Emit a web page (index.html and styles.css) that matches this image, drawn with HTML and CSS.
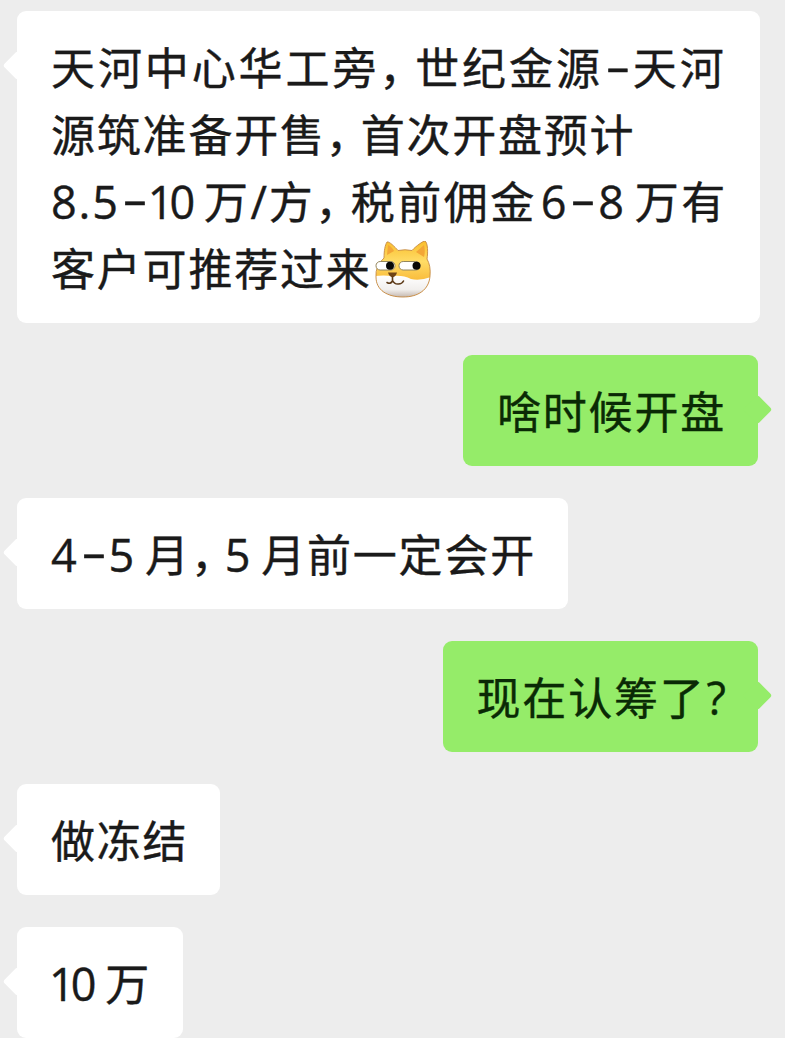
FILE: index.html
```
<!DOCTYPE html>
<html lang="zh-CN">
<head>
  <meta charset="UTF-8" />
  <meta name="viewport" content="width=device-width, initial-scale=1.0" />
  <title>聊天记录</title>
  <link rel="stylesheet" href="styles.css">
</head>
<body>
  <div class="chat">
    <div class="bubble left long">
      <div class="line wide">天河中心华工旁<span class="comma">，</span>世纪金源<span class="dash">-</span>天河</div>
      <div class="line">源筑准备开售<span class="comma">，</span>首次开盘预计</div>
      <div class="line mid"><span class="num first ten">8.5<span class="dash">-</span><span class="one">1</span>0</span>万<span class="num slash">/</span>方<span class="comma">，</span>税前佣金<span class="num">6<span class="dash">-</span>8</span>万有</div>
      <div class="line">客户可推荐过来<svg class="doge" viewBox="0 0 56 58">
        <defs>
          <linearGradient id="fur" x1="0" y1="0" x2="0" y2="1">
            <stop offset="0" stop-color="#f9bd2b" />
            <stop offset="0.35" stop-color="#ffdc66" />
            <stop offset="0.8" stop-color="#f7b02c" />
          </linearGradient>
          <linearGradient id="chin" x1="0" y1="0" x2="0" y2="1">
            <stop offset="0" stop-color="#ffffff" />
            <stop offset="0.6" stop-color="#f1efed" />
            <stop offset="1" stop-color="#b9aaa0" />
          </linearGradient>
          <clipPath id="head">
            <path d="M12 1 C14 0 20 6 23 9.500 Q30 8 37 9.500 C41 5 48 0 50 0 C53 2 53 12 52 18 Q56 25 55 35 C54 49 43 56 28 56 C12 56 1 49 1 36 Q0 25 9 17 C9 10 10 4 12 1Z" />
          </clipPath>
        </defs>
        <g clip-path="url(#head)">
          <rect width="56" height="58" fill="url(#fur)" />
          <path d="M13 4 C16 5 18 8 19 10 L12 14Z M49 4 C50 9 50 12 49 16 L41 11Z" fill="#f3a637" />
          <path d="M0 35 Q8 34 18 35 Q28 34 36 38 Q45 40 56 36 V58 H0Z" fill="url(#chin)" />
        </g>
        <path d="M12 1 C14 0 20 6 23 9.500 Q30 8 37 9.500 C41 5 48 0 50 0 C53 2 53 12 52 18 Q56 25 55 35 C54 49 43 56 28 56 C12 56 1 49 1 36 Q0 25 9 17 C9 10 10 4 12 1Z" fill="none" stroke="#c58a45" stroke-width="0.900" />
        <rect x="1" y="20.500" width="19" height="8.500" rx="4.200" fill="#fff" stroke="#94865c" />
        <rect x="24" y="20.500" width="21" height="8.500" rx="4.200" fill="#fff" stroke="#94865c" />
        <circle cx="15" cy="24.700" r="4" fill="#080706" />
        <circle cx="41.500" cy="24.700" r="4" fill="#080706" />
        <path d="M13 31.500 H22 Q21 35.500 17.500 36.500 Q14 35.500 13 31.500Z" fill="#704416" />
        <path d="M17.500 36 V40 Q15.500 43.500 12 41.500 M17.500 39.500 Q19.500 43.500 23.500 43 Q27 43 28.500 40" fill="none" stroke="#5d3b19" stroke-width="1.600" stroke-linecap="round" />
      </svg></div>
    </div>
    <div class="bubble right">啥时候开盘</div>
    <div class="bubble left"><span class="num first">4<span class="dash">-</span>5</span>月<span class="comma">，</span><span class="num second">5</span>月前一定会开</div>
    <div class="bubble right">现在认筹了<span class="num mark">?</span></div>
    <div class="bubble left">做冻结</div>
    <div class="bubble left"><span class="num first ten"><span class="one">1</span>0</span>万</div>
  </div>
</body>
</html>
```
FILE: styles.css
```
* {
  box-sizing: border-box;
}
body {
  margin: 0;
  background: #ededed;
  color: #1a1a1a;
  font-family: "Noto Sans CJK SC", sans-serif;
}
.chat {
  display: flex;
  flex-direction: column;
  align-items: flex-start;
  gap: 32px;
  height: 1038px;
  padding: 11px 27px 0 17px;
  overflow: hidden;
}
.bubble {
  position: relative;
  flex: none;
  height: 111px;
  padding: 22px 32px 22px 34px;
  border-radius: 9px;
  font-size: 44px;
  line-height: 67px;
  letter-spacing: 1.8px;
  white-space: nowrap;
  -webkit-text-stroke: 0.4px;
}
.bubble::before {
  content: "";
  position: absolute;
  top: 44px;
  width: 21px;
  height: 21px;
  border-radius: 3px;
  background: inherit;
  transform: rotate(45deg);
}
.left {
  background: #fff;
}
.left::before {
  left: -10px;
}
.right {
  align-self: flex-end;
  background: #95ec69;
  color: #0a2a05;
}
.right::before {
  right: -10px;
}
.long {
  width: 743px;
  height: 312px;
}
.line {
  height: 67px;
}
.wide {
  letter-spacing: 2.9px;
}
.mid {
  letter-spacing: 2.5px;
}
.comma {
  margin-right: 11px;
  font-feature-settings: "halt";
}
.num {
  margin: 0 9px 0 4px;
  font-family: "Open Sans", "Noto Sans", sans-serif;
  font-size: 45px;
  line-height: 1;
  letter-spacing: 1.8px;
}
.first {
  margin-left: 0;
}
.second {
  margin-left: -1px;
}
.ten {
  margin-right: 7px;
}
.one {
  margin-left: -2px;
  letter-spacing: -4px;
}
.dash {
  display: inline-block;
  width: 30px;
  font-family: "Open Sans", sans-serif;
  line-height: 1;
  letter-spacing: 0;
  text-align: center;
  transform: translateY(-3px) scaleX(1.75);
}
.slash {
  margin: 0;
}
.mark {
  margin: 0 0 0 1px;
  letter-spacing: 0;
}
.doge {
  width: 56px;
  height: 58px;
  margin-left: 3px;
  vertical-align: -13px;
}
```
